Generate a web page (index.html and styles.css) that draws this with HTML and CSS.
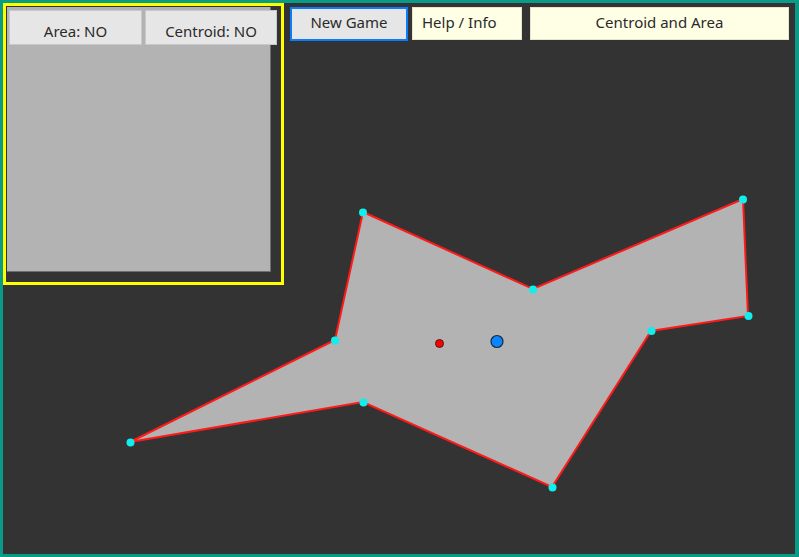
FILE: index.html
```html
<!DOCTYPE html>
<html lang="en">
<head>
<meta charset="utf-8">
<title>Centroid and Area</title>
<link rel="stylesheet" href="styles.css">
</head>
<body>
<div class="stage">
  <svg class="board" width="792" height="551" viewBox="3 3 792 551" xmlns="http://www.w3.org/2000/svg">
    <polygon class="shape" points="363,212 533,289 743,199 748,316 651,331 552,487 363,402 130,442 335,340"/>
    <g class="vertex">
      <circle cx="363" cy="212.5" r="4"/>
      <circle cx="533" cy="289.5" r="4"/>
      <circle cx="743" cy="199.5" r="4"/>
      <circle cx="748.5" cy="316" r="4"/>
      <circle cx="651.5" cy="331" r="4"/>
      <circle cx="552.5" cy="487.5" r="4"/>
      <circle cx="363.5" cy="402.5" r="4"/>
      <circle cx="130.5" cy="442.5" r="4"/>
      <circle cx="335" cy="340.5" r="4"/>
    </g>
    <circle class="guess" cx="439.5" cy="343.5" r="4"/>
    <circle class="centroid" cx="497" cy="341.5" r="6"/>
  </svg>

  <div class="toolbar">
    <div class="panel">
      <div class="preview">
        <div class="toggles">
          <button class="toggle">Area: NO</button>
          <button class="toggle toggle-wide">Centroid: NO</button>
        </div>
      </div>
    </div>
    <button class="btn btn-new">New Game</button>
    <div class="label label-help">Help / Info</div>
    <div class="label label-title">Centroid and Area</div>
  </div>
</div>
</body>
</html>
```
FILE: styles.css
```css
html, body {
  margin: 0;
  padding: 0;
}

body {
  width: 799px;
  height: 557px;
  background: #0a9a88;
  font-family: "Noto Sans", "Open Sans", sans-serif;
  font-size: 15px;
  line-height: 20px;
  color: #2a2a2a;
  overflow: hidden;
}

.stage {
  position: relative;
  box-sizing: border-box;
  width: 799px;
  height: 557px;
  border-style: solid;
  border-color: #0a9a88;
  border-width: 3px 4px 3px 3px;
  background: #333333;
}

.board {
  position: absolute;
  left: 0;
  top: 0;
  display: block;
}

.shape {
  fill: #b3b3b3;
  stroke: #ff1a1a;
  stroke-width: 2;
  stroke-linejoin: miter;
}

.vertex circle {
  fill: #11eeee;
}

.guess {
  fill: #ff0000;
  stroke: #4a1a1a;
  stroke-width: 1;
}

.centroid {
  fill: #0a84ff;
  stroke: #1a2a3a;
  stroke-width: 1.2;
}

.toolbar {
  position: relative;
  display: flex;
  align-items: flex-start;
}

.panel {
  box-sizing: border-box;
  width: 281px;
  height: 282px;
  border: 3px solid #ffff00;
  padding: 1px;
}

.preview {
  box-sizing: border-box;
  width: 264px;
  height: 265px;
  background: #b3b3b3;
  border-right: 1px solid #6e6e6e;
  border-bottom: 1px solid #6e6e6e;
  padding: 3px 0 0 2px;
}

.toggles {
  display: flex;
  gap: 3px;
  width: 268px;
}

.toggle {
  box-sizing: border-box;
  width: 133px;
  height: 35px;
  margin: 0;
  padding: 7px 0 0;
  background: #e6e6e6;
  border: 1px solid #c8c8c8;
  font: inherit;
  line-height: 20px;
  color: #2a2a2a;
}

.toggle-wide {
  width: 132px;
}

.btn {
  box-sizing: border-box;
  margin: 4px 0 0 6px;
  width: 118px;
  height: 34px;
  padding: 0 0 4px;
  background: #e6e6e6;
  border: 2px solid #0a7cff;
  font: inherit;
  line-height: 20px;
  color: #2a2a2a;
}

.label {
  box-sizing: border-box;
  height: 33px;
  margin-top: 4px;
  padding-top: 4px;
  background: #ffffe6;
  border: 1px solid #e6e6cc;
  white-space: nowrap;
}

.label-help {
  width: 110px;
  margin-left: 4px;
  padding-left: 9px;
}

.label-title {
  width: 259px;
  margin-left: 8px;
  text-align: center;
}
```
